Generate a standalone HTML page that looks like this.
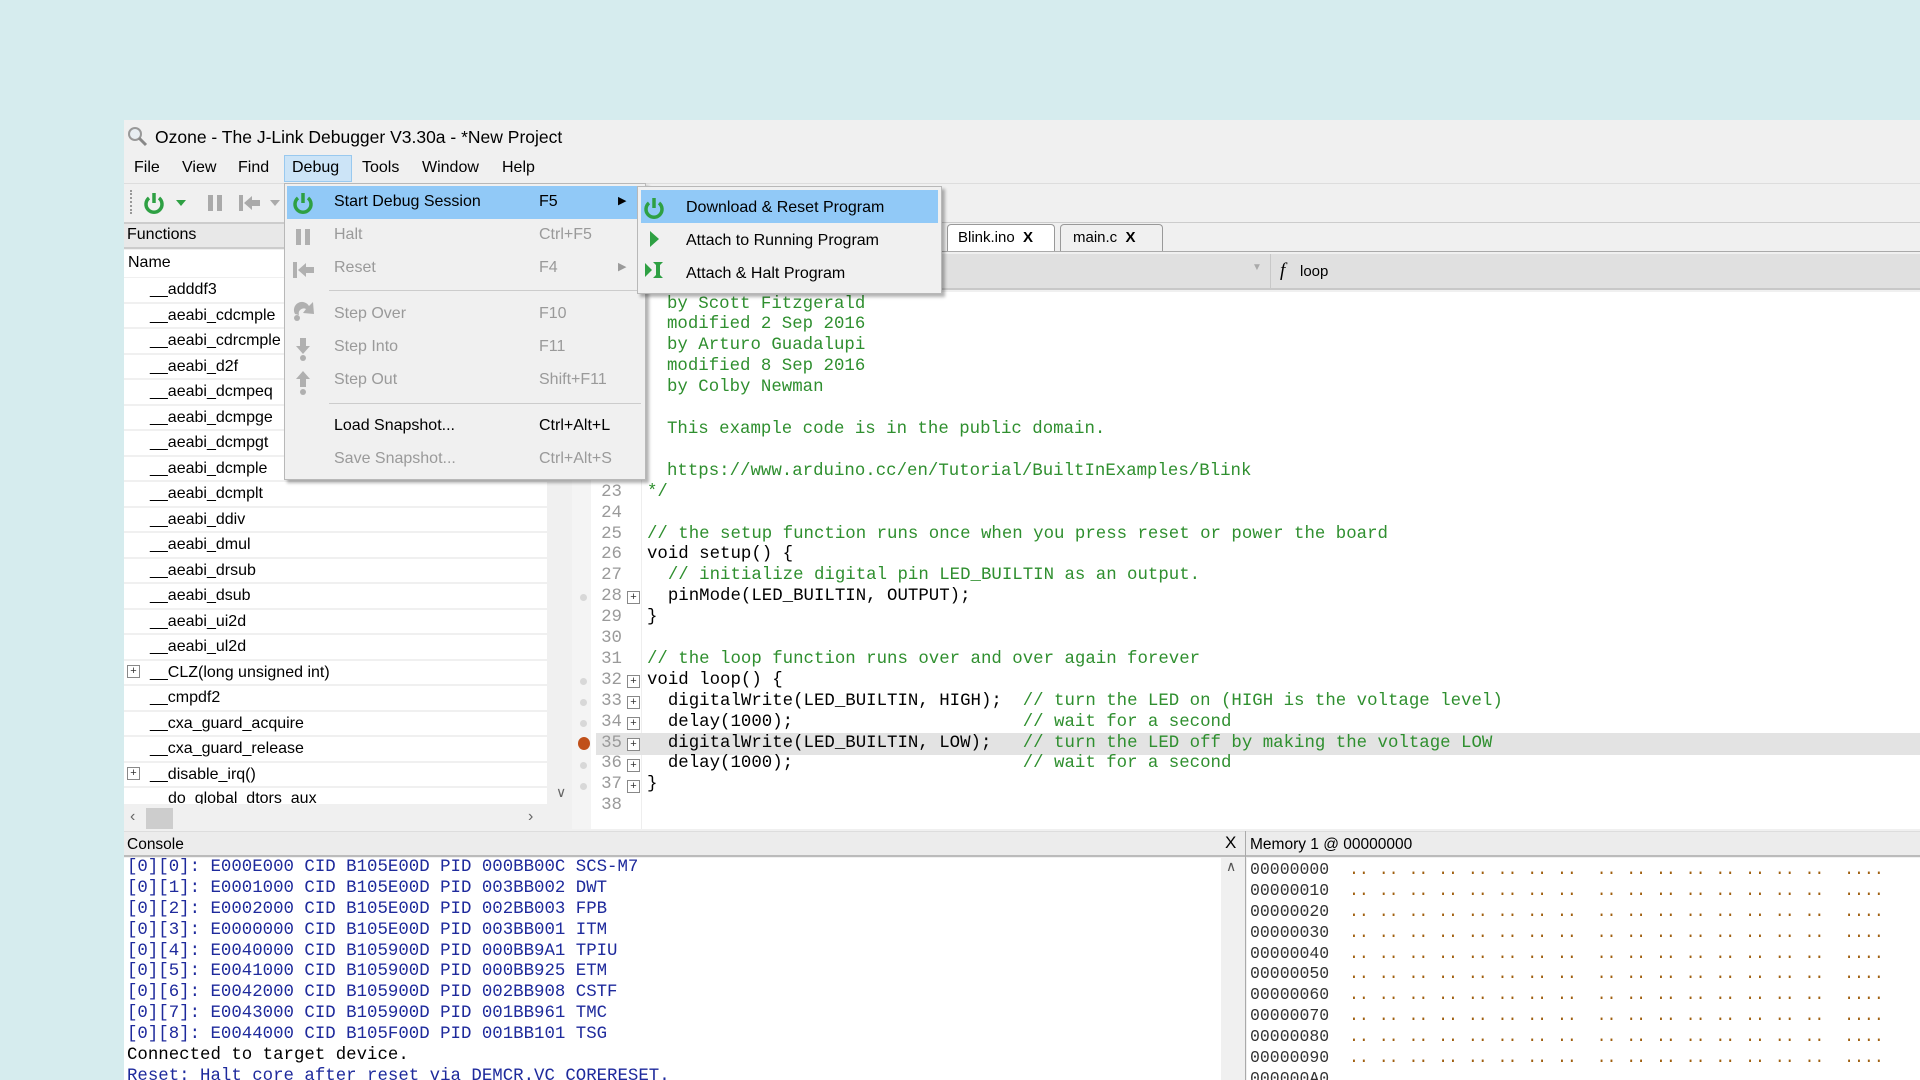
<!DOCTYPE html>
<html><head><meta charset="utf-8"><style>
*{margin:0;padding:0;box-sizing:border-box}
html,body{width:1920px;height:1080px;overflow:hidden}
body{background:#d6ecee;position:relative;font-family:"Liberation Sans",sans-serif;font-size:16px;color:#000}
.a{position:absolute;white-space:pre}
.blk{position:absolute;white-space:normal}
.blk div{white-space:pre;height:20.9px;line-height:20.9px}
.mono{font-family:"Liberation Mono",monospace;font-size:17.4px}
.win{position:absolute;left:124px;top:120px;width:1796px;height:960px;background:#f0f0f0}
.row{position:absolute;left:124px;width:423px;height:25.5px;background:#fff;border-bottom:2px solid #f0f0f0}
.row span{position:absolute;left:26px;top:3px;white-space:pre}
.cl{position:absolute;left:0;height:20.9px;line-height:20.9px;white-space:pre}
.g{color:#2f8f2f}
.ln{position:absolute;width:30px;text-align:right;color:#9a9a9a}
.pl{position:absolute;width:13px;height:13px;border:1px solid #888;background:#fff;font-size:11px;line-height:11px;text-align:center;color:#333}
.dot{position:absolute;width:7px;height:7px;border-radius:50%;background:#d8d8d8}
.menu{position:absolute;background:#f0f0f0;border:1px solid #b8b8b8;box-shadow:3px 3px 3px rgba(0,0,0,.3)}
.mi{position:absolute;left:0;right:0;height:33px;line-height:33px}
.dis{color:#9a9a9a}
.cn{color:#1e2a9c}
</style></head><body>
<div class="win"></div>
<svg class="a" style="left:127px;top:126px" width="22" height="22"><circle cx="8" cy="8" r="6" fill="#e8eef2" stroke="#999" stroke-width="2"/><line x1="12" y1="12" x2="19" y2="19" stroke="#888" stroke-width="3"/></svg>
<div class="a" style="left:155px;top:127px;font-size:17.5px">Ozone - The J-Link Debugger V3.30a - *New Project</div>
<div class="a" style="left:284px;top:155px;width:68px;height:27px;background:#cce4f7;border:1px solid #99c9ef"></div>
<div class="a" style="left:134px;top:159px">File</div>
<div class="a" style="left:182px;top:159px">View</div>
<div class="a" style="left:238px;top:159px">Find</div>
<div class="a" style="left:292px;top:159px">Debug</div>
<div class="a" style="left:362px;top:159px">Tools</div>
<div class="a" style="left:422px;top:159px">Window</div>
<div class="a" style="left:502px;top:159px">Help</div>
<div class="a" style="left:124px;top:183px;width:1796px;height:1px;background:#ddd"></div>
<div class="a" style="left:130px;top:190px;width:2px;height:24px;border-left:2px dotted #999"></div>
<svg class="a" style="left:142px;top:190px" width="150" height="26">
<path d="M7 8 A8 8 0 1 0 17 8" fill="none" stroke="#2ea043" stroke-width="3.5"/><line x1="12" y1="3" x2="12" y2="13" stroke="#2ea043" stroke-width="3.5"/>
<path d="M34 10 L44 10 L39 16Z" fill="#2ea043"/>
<rect x="66" y="5" width="5" height="16" fill="#aaa"/><rect x="75" y="5" width="5" height="16" fill="#aaa"/>
<rect x="97" y="5" width="4" height="16" fill="#aaa"/><path d="M102 13 L110 6 L110 10 L118 10 L118 16 L110 16 L110 20Z" fill="#aaa"/>
<path d="M128 10 L138 10 L133 16Z" fill="#aaa"/></svg>
<div class="a" style="left:124px;top:222px;width:423px;height:27px;background:#e8e8e8;border-top:2px solid #ccc;border-bottom:2px solid #ccc"></div>
<div class="a" style="left:127px;top:226px">Functions</div>
<div class="a" style="left:124px;top:250px;width:423px;height:27px;background:#fff"></div>
<div class="a" style="left:128px;top:254px">Name</div>
<div class="row" style="top:278px"><span>__adddf3</span></div>
<div class="row" style="top:303.5px"><span>__aeabi_cdcmple</span></div>
<div class="row" style="top:329px"><span>__aeabi_cdrcmple</span></div>
<div class="row" style="top:354.5px"><span>__aeabi_d2f</span></div>
<div class="row" style="top:380px"><span>__aeabi_dcmpeq</span></div>
<div class="row" style="top:405.5px"><span>__aeabi_dcmpge</span></div>
<div class="row" style="top:431px"><span>__aeabi_dcmpgt</span></div>
<div class="row" style="top:456.5px"><span>__aeabi_dcmple</span></div>
<div class="row" style="top:482px"><span>__aeabi_dcmplt</span></div>
<div class="row" style="top:507.5px"><span>__aeabi_ddiv</span></div>
<div class="row" style="top:533px"><span>__aeabi_dmul</span></div>
<div class="row" style="top:558.5px"><span>__aeabi_drsub</span></div>
<div class="row" style="top:584px"><span>__aeabi_dsub</span></div>
<div class="row" style="top:609.5px"><span>__aeabi_ui2d</span></div>
<div class="row" style="top:635px"><span>__aeabi_ul2d</span></div>
<div class="row" style="top:660.5px"><span>__CLZ(long unsigned int)</span></div>
<div class="row" style="top:686px"><span>__cmpdf2</span></div>
<div class="row" style="top:711.5px"><span>__cxa_guard_acquire</span></div>
<div class="row" style="top:737px"><span>__cxa_guard_release</span></div>
<div class="row" style="top:762.5px"><span>__disable_irq()</span></div>
<div class="row" style="top:788px;height:18px;overflow:hidden"><span style="left:44px;top:2px">do_global_dtors_aux</span></div>
<div class="pl" style="left:127px;top:665px">+</div>
<div class="pl" style="left:127px;top:767px">+</div>
<div class="a" style="left:547px;top:250px;width:25px;height:556px;background:#f0f0f0"></div>
<div class="a" style="left:556px;top:784px;color:#666;font-size:14px">&#8744;</div>
<div class="a" style="left:124px;top:806px;width:448px;height:24px;background:#f0f0f0"></div>
<div class="a" style="left:130px;top:808px;color:#666;font-size:16px">&#8249;</div>
<div class="a" style="left:146px;top:808px;width:27px;height:21px;background:#cdcdcd"></div>
<div class="a" style="left:528px;top:808px;color:#666;font-size:16px">&#8250;</div>
<div class="a" style="left:572px;top:222px;width:1348px;height:1px;background:#ccc"></div>
<div class="a" style="left:947px;top:224px;width:108px;height:28px;background:#fff;border:1px solid #999;border-bottom:none;border-radius:4px 4px 0 0;font-size:15px;padding:4px 0 0 10px">Blink.ino&nbsp;&nbsp;<b>X</b></div>
<div class="a" style="left:1060px;top:224px;width:103px;height:27px;background:#f0f0f0;border:1px solid #999;border-bottom:none;border-radius:4px 4px 0 0;font-size:15px;padding:4px 0 0 12px">main.c&nbsp;&nbsp;<b>X</b></div>
<div class="a" style="left:572px;top:251px;width:1348px;height:1px;background:#aaa"></div>
<div class="a" style="left:572px;top:254px;width:1348px;height:36px;background:#e0e0e0;border-bottom:2px solid #c8c8c8"></div>
<div class="a" style="left:1270px;top:254px;width:1px;height:36px;background:#c8c8c8"></div>
<div class="a" style="left:1252px;top:262px;color:#aaa;font-size:10px">&#9660;</div>
<div class="a" style="left:1280px;top:260px;font-family:'Liberation Serif',serif;font-style:italic;font-size:19px">f</div>
<div class="a" style="left:1300px;top:263px;font-size:15px">loop</div>
<div class="a" style="left:572px;top:292px;width:1348px;height:537px;background:#fff"></div>
<div class="a" style="left:572px;top:292px;width:19px;height:537px;background:#f4f4f4"></div>
<div class="a" style="left:641px;top:292px;width:1px;height:537px;background:#eee"></div>
<div class="a" style="left:596px;top:733px;width:1324px;height:22px;background:#e3e3e3"></div>
<div class="blk mono" style="left:0;top:0">
<div class="cl g" style="top:294.5px;left:667px">by Scott Fitzgerald</div>
<div class="cl g" style="top:315.4px;left:667px">modified 2 Sep 2016</div>
<div class="cl g" style="top:336.3px;left:667px">by Arturo Guadalupi</div>
<div class="cl g" style="top:357.2px;left:667px">modified 8 Sep 2016</div>
<div class="cl g" style="top:378.1px;left:667px">by Colby Newman</div>
<div class="cl g" style="top:420px;left:667px">This example code is in the public domain.</div>
<div class="cl g" style="top:461.8px;left:667px">https://www.arduino.cc/en/Tutorial/BuiltInExamples/Blink</div>
<div class="cl g" style="top:482.7px;left:647px">*/</div>
<div class="cl g" style="top:524.5px;left:647px">// the setup function runs once when you press reset or power the board</div>
<div class="cl" style="top:545.4px;left:647px">void setup() {</div>
<div class="cl g" style="top:566.3px;left:647px">  // initialize digital pin LED_BUILTIN as an output.</div>
<div class="cl" style="top:587.2px;left:647px">  pinMode(LED_BUILTIN, OUTPUT);</div>
<div class="cl" style="top:608.1px;left:647px">}</div>
<div class="cl g" style="top:649.9px;left:647px">// the loop function runs over and over again forever</div>
<div class="cl" style="top:670.8px;left:647px">void loop() {</div>
<div class="cl" style="top:691.7px;left:647px">  digitalWrite(LED_BUILTIN, HIGH);  <span class="g">// turn the LED on (HIGH is the voltage level)</span></div>
<div class="cl" style="top:712.6px;left:647px">  delay(1000);                      <span class="g">// wait for a second</span></div>
<div class="cl" style="top:733.5px;left:647px">  digitalWrite(LED_BUILTIN, LOW);   <span class="g">// turn the LED off by making the voltage LOW</span></div>
<div class="cl" style="top:754.4px;left:647px">  delay(1000);                      <span class="g">// wait for a second</span></div>
<div class="cl" style="top:775.3px;left:647px">}</div>
<div class="ln cl" style="top:482.7px;left:592px">23</div>
<div class="ln cl" style="top:503.6px;left:592px">24</div>
<div class="ln cl" style="top:524.5px;left:592px">25</div>
<div class="ln cl" style="top:545.4px;left:592px">26</div>
<div class="ln cl" style="top:566.3px;left:592px">27</div>
<div class="ln cl" style="top:587.2px;left:592px">28</div>
<div class="ln cl" style="top:608.1px;left:592px">29</div>
<div class="ln cl" style="top:629px;left:592px">30</div>
<div class="ln cl" style="top:649.9px;left:592px">31</div>
<div class="ln cl" style="top:670.8px;left:592px">32</div>
<div class="ln cl" style="top:691.7px;left:592px">33</div>
<div class="ln cl" style="top:712.6px;left:592px">34</div>
<div class="ln cl" style="top:733.5px;left:592px">35</div>
<div class="ln cl" style="top:754.4px;left:592px">36</div>
<div class="ln cl" style="top:775.3px;left:592px">37</div>
<div class="ln cl" style="top:796.2px;left:592px">38</div>
</div>
<div class="pl" style="left:627px;top:591px">+</div>
<div class="pl" style="left:627px;top:675px">+</div>
<div class="pl" style="left:627px;top:696px">+</div>
<div class="pl" style="left:627px;top:717px">+</div>
<div class="pl" style="left:627px;top:738px">+</div>
<div class="pl" style="left:627px;top:759px">+</div>
<div class="pl" style="left:627px;top:780px">+</div>
<div class="dot" style="left:580px;top:594px"></div>
<div class="dot" style="left:580px;top:678px"></div>
<div class="dot" style="left:580px;top:699px"></div>
<div class="dot" style="left:580px;top:720px"></div>
<div class="dot" style="left:580px;top:762px"></div>
<div class="dot" style="left:580px;top:783px"></div>
<div class="a" style="left:578px;top:737px;width:12px;height:13px;border-radius:50%;background:#c0501a"></div>
<div class="a" style="left:124px;top:831px;width:1796px;height:26px;background:#ececec;border-top:1px solid #ddd;border-bottom:2px solid #bbb"></div>
<div class="a" style="left:127px;top:836px;font-size:15.5px">Console</div>
<div class="a" style="left:1225px;top:833px;font-size:17px">X</div>
<div class="a" style="left:1245px;top:831px;width:1px;height:249px;background:#aaa"></div>
<div class="a" style="left:1250px;top:836px;font-size:15.5px">Memory 1 @ 00000000</div>
<div class="a" style="left:124px;top:858px;width:1097px;height:222px;background:#fff"></div>
<div class="a" style="left:1221px;top:858px;width:23px;height:222px;background:#f0f0f0"></div>
<div class="a" style="left:1226px;top:858px;color:#555;font-size:14px">&#8743;</div>
<div class="a" style="left:1247px;top:858px;width:673px;height:222px;background:#fff"></div>
<div class="blk mono" style="left:127px;top:858px;width:1090px;height:222px;overflow:hidden"><div class="cn">[0][0]: E000E000 CID B105E00D PID 000BB00C SCS-M7</div><div class="cn">[0][1]: E0001000 CID B105E00D PID 003BB002 DWT</div><div class="cn">[0][2]: E0002000 CID B105E00D PID 002BB003 FPB</div><div class="cn">[0][3]: E0000000 CID B105E00D PID 003BB001 ITM</div><div class="cn">[0][4]: E0040000 CID B105900D PID 000BB9A1 TPIU</div><div class="cn">[0][5]: E0041000 CID B105900D PID 000BB925 ETM</div><div class="cn">[0][6]: E0042000 CID B105900D PID 002BB908 CSTF</div><div class="cn">[0][7]: E0043000 CID B105900D PID 001BB961 TMC</div><div class="cn">[0][8]: E0044000 CID B105F00D PID 001BB101 TSG</div><div>Connected to target device.</div><div class="cn">Reset: Halt core after reset via DEMCR.VC_CORERESET.</div></div>
<div class="blk mono" style="left:1250px;top:860px;width:670px;height:220px;overflow:hidden;font-size:16.5px;color:#333"><div>00000000  <span style="color:#a06010">.. .. .. .. .. .. .. ..  .. .. .. .. .. .. .. ..  ....</span></div><div>00000010  <span style="color:#a06010">.. .. .. .. .. .. .. ..  .. .. .. .. .. .. .. ..  ....</span></div><div>00000020  <span style="color:#a06010">.. .. .. .. .. .. .. ..  .. .. .. .. .. .. .. ..  ....</span></div><div>00000030  <span style="color:#a06010">.. .. .. .. .. .. .. ..  .. .. .. .. .. .. .. ..  ....</span></div><div>00000040  <span style="color:#a06010">.. .. .. .. .. .. .. ..  .. .. .. .. .. .. .. ..  ....</span></div><div>00000050  <span style="color:#a06010">.. .. .. .. .. .. .. ..  .. .. .. .. .. .. .. ..  ....</span></div><div>00000060  <span style="color:#a06010">.. .. .. .. .. .. .. ..  .. .. .. .. .. .. .. ..  ....</span></div><div>00000070  <span style="color:#a06010">.. .. .. .. .. .. .. ..  .. .. .. .. .. .. .. ..  ....</span></div><div>00000080  <span style="color:#a06010">.. .. .. .. .. .. .. ..  .. .. .. .. .. .. .. ..  ....</span></div><div>00000090  <span style="color:#a06010">.. .. .. .. .. .. .. ..  .. .. .. .. .. .. .. ..  ....</span></div><div>000000A0</div></div>
<div class="menu" style="left:284px;top:183px;width:362px;height:297px">
<div class="mi" style="top:2px;left:2px;right:2px;background:#91c9f7"></div>
<div class="a" style="left:49px;top:9px">Start Debug Session</div><div class="a" style="left:254px;top:9px">F5</div><div class="a" style="left:333px;top:10px;font-size:11px">&#9654;</div>
<div class="a dis" style="left:49px;top:42px">Halt</div><div class="a dis" style="left:254px;top:42px">Ctrl+F5</div>
<div class="a dis" style="left:49px;top:75px">Reset</div><div class="a dis" style="left:254px;top:75px">F4</div><div class="a dis" style="left:333px;top:76px;font-size:11px">&#9654;</div>
<div class="a" style="left:44px;top:106px;width:312px;height:1px;background:#ccc"></div>
<div class="a dis" style="left:49px;top:121px">Step Over</div><div class="a dis" style="left:254px;top:121px">F10</div>
<div class="a dis" style="left:49px;top:154px">Step Into</div><div class="a dis" style="left:254px;top:154px">F11</div>
<div class="a dis" style="left:49px;top:187px">Step Out</div><div class="a dis" style="left:254px;top:187px">Shift+F11</div>
<div class="a" style="left:44px;top:219px;width:312px;height:1px;background:#ccc"></div>
<div class="a" style="left:49px;top:233px">Load Snapshot...</div><div class="a" style="left:254px;top:233px">Ctrl+Alt+L</div>
<div class="a dis" style="left:49px;top:266px">Save Snapshot...</div><div class="a dis" style="left:254px;top:266px">Ctrl+Alt+S</div>
<svg class="a" style="left:4px;top:4px" width="32" height="290">
<path d="M9 10 A8 8 0 1 0 19 10" fill="none" stroke="#2ea043" stroke-width="3.5"/><line x1="14" y1="5" x2="14" y2="15" stroke="#2ea043" stroke-width="3.5"/>
<rect x="7" y="41" width="5" height="16" fill="#b0b0b0"/><rect x="16" y="41" width="5" height="16" fill="#b0b0b0"/>
<rect x="4" y="74" width="4" height="16" fill="#b0b0b0"/><path d="M9 82 L17 75 L17 79 L25 79 L25 85 L17 85 L17 89Z" fill="#b0b0b0"/>
<path d="M6 126 A8 8 0 0 1 20 118 L24 114 L25 126 L14 125 L17 121 A5 5 0 0 0 10 127Z" fill="#b0b0b0"/><circle cx="8" cy="130" r="3" fill="#b0b0b0"/>
<path d="M11 150 L17 150 L17 158 L21 158 L14 166 L7 158 L11 158Z" fill="#b0b0b0"/><circle cx="14" cy="170" r="3" fill="#b0b0b0"/>
<path d="M14 183 L21 191 L17 191 L17 199 L11 199 L11 191 L7 191Z" fill="#b0b0b0"/><circle cx="14" cy="204" r="3" fill="#b0b0b0"/>
</svg>
</div>
<div class="menu" style="left:637px;top:186px;width:305px;height:108px">
<div class="a" style="left:3px;top:3px;width:297px;height:33px;background:#91c9f7"></div>
<div class="a" style="left:48px;top:12px">Download &amp; Reset Program</div>
<div class="a" style="left:48px;top:45px">Attach to Running Program</div>
<div class="a" style="left:48px;top:78px">Attach &amp; Halt Program</div>
<svg class="a" style="left:4px;top:6px" width="30" height="100">
<path d="M7 10 A8 8 0 1 0 17 10" fill="none" stroke="#2ea043" stroke-width="3.5"/><line x1="12" y1="5" x2="12" y2="15" stroke="#2ea043" stroke-width="3.5"/>
<path d="M8 38 L17 46 L8 54Z" fill="#2ea043"/>
<path d="M3 70 L10 77 L3 84Z" fill="#2ea043"/><path d="M11 69 L21 69 L18 72 L18 82 L21 85 L11 85 L14 82 L14 72Z" fill="#2ea043"/>
</svg>
</div>
</body></html>
